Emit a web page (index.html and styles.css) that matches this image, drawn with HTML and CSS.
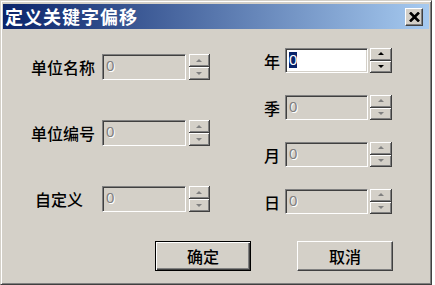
FILE: index.html
```html
<!DOCTYPE html>
<html lang="zh-CN">
<head>
    <meta charset="UTF-8">
    <title>定义关键字偏移</title>
    <link rel="stylesheet" href="styles.css">
</head>
<body>

<div class="window">
    <div class="titlebar">
        <span class="title">定义关键字偏移</span>
        <div class="close" aria-label="关闭">
            <svg width="11" height="10" viewBox="0 0 11 10">
                <path d="M1 0.5 L10 9.5 M10 0.5 L1 9.5" stroke="#000" stroke-width="2.6"/>
            </svg>
        </div>
    </div>

    <div class="body">
        <div class="fields">
            <!-- left column -->
            <div class="col col-left">
                <div class="field">
                    <span class="label">单位名称</span>
                    <div class="edit disabled"><span>0</span></div>
                    <div class="spinner disabled"><div class="spin up"></div><div class="spin down"></div></div>
                </div>
                <div class="field">
                    <span class="label">单位编号</span>
                    <div class="edit disabled"><span>0</span></div>
                    <div class="spinner disabled"><div class="spin up"></div><div class="spin down"></div></div>
                </div>
                <div class="field">
                    <span class="label label-indent">自定义</span>
                    <div class="edit disabled"><span>0</span></div>
                    <div class="spinner disabled"><div class="spin up"></div><div class="spin down"></div></div>
                </div>
            </div>

            <!-- right column -->
            <div class="col col-right">
                <div class="field">
                    <span class="label">年</span>
                    <div class="edit"><span class="selected">0</span></div>
                    <div class="spinner"><div class="spin up"></div><div class="spin down"></div></div>
                </div>
                <div class="field">
                    <span class="label">季</span>
                    <div class="edit disabled"><span>0</span></div>
                    <div class="spinner disabled"><div class="spin up"></div><div class="spin down"></div></div>
                </div>
                <div class="field">
                    <span class="label">月</span>
                    <div class="edit disabled"><span>0</span></div>
                    <div class="spinner disabled"><div class="spin up"></div><div class="spin down"></div></div>
                </div>
                <div class="field">
                    <span class="label">日</span>
                    <div class="edit disabled"><span>0</span></div>
                    <div class="spinner disabled"><div class="spin up"></div><div class="spin down"></div></div>
                </div>
            </div>
        </div>

        <div class="actions">
            <div class="btn btn-default">确定</div>
            <div class="btn">取消</div>
        </div>
    </div>
</div>

</body>
</html>
```

FILE: styles.css
```css
body {
    margin: 0;
    background: #fff;
    font-family: "Noto Sans CJK SC", "Liberation Sans", sans-serif;
}

.window {
    width: 432px;
    height: 285px;
    box-sizing: border-box;
    background: #d4d0c8;
    border: 1px solid;
    border-color: #d4d0c8 #404040 #404040 #d4d0c8;
    box-shadow: inset 1px 1px #fff, inset -1px -1px #808080;
    padding: 3px 2px 2px 2px;
    display: flex;
    flex-direction: column;
}

.titlebar {
    height: 25px;
    background: linear-gradient(to right, #0a246a, #a6caf0);
    display: flex;
    align-items: center;
    justify-content: space-between;
    padding: 0 6px 0 2px;
}

.title {
    color: #fff;
    font-weight: bold;
    font-size: 18px;
    line-height: 25px;
    letter-spacing: 1px;
}

.close {
    width: 18px;
    height: 18px;
    box-sizing: border-box;
    background: #d4d0c8;
    border: 1px solid;
    border-color: #fff #404040 #404040 #fff;
    box-shadow: inset -1px -1px #808080;
    display: flex;
    align-items: center;
    justify-content: center;
}

.body {
    flex: 1;
    display: flex;
    flex-direction: column;
}

.fields {
    display: flex;
    align-items: flex-start;
}

.col {
    display: flex;
    flex-direction: column;
}

.col-left {
    margin-left: 28px;
    margin-top: 25px;
    gap: 40px;
}

.col-right {
    margin-left: 48px;
    margin-top: 19px;
    gap: 22px;
}

.field {
    display: flex;
    align-items: center;
    height: 26px;
}

.col-right .field {
    height: 25px;
}

.label {
    font-size: 16px;
    font-weight: 500;
    color: #000;
    width: 71px;
}

.label-indent {
    padding-left: 4px;
    box-sizing: border-box;
}

.col-right .label {
    width: 27px;
    text-align: right;
    padding-right: 5px;
    box-sizing: border-box;
}

.edit {
    width: 84px;
    height: 100%;
    box-sizing: border-box;
    background: #fff;
    border: 1px solid;
    border-color: #808080 #fff #fff #808080;
    box-shadow: inset 1px 1px #404040, inset -1px -1px #d4d0c8;
    padding: 2px 0 0 3px;
    font-family: "Liberation Sans", sans-serif;
    font-size: 15px;
    line-height: 18px;
}

.col-right .edit {
    width: 83px;
}

.edit.disabled {
    background: #d4d0c8;
    color: #808080;
    text-shadow: 1px 1px #fff;
}

.selected {
    display: inline-block;
    background: #0a246a;
    color: #fff;
    width: 8px;
    text-align: center;
    line-height: 16px;
}

.spinner {
    width: 21px;
    height: 100%;
    margin-left: 3px;
    display: flex;
    flex-direction: column;
}

.col-right .spinner {
    margin-left: 2px;
    width: 22px;
}

.spin {
    flex: 1;
    background: #d4d0c8;
    border-right: 1px solid #404040;
    border-bottom: 1px solid #404040;
    box-shadow: inset 1px 1px #fff, inset -1px -1px #808080;
    display: flex;
    align-items: center;
    justify-content: center;
}

.spin::after {
    content: "";
    border-left: 3px solid transparent;
    border-right: 3px solid transparent;
}

.spin.up::after {
    border-bottom: 3px solid #000;
}

.spin.down::after {
    border-top: 3px solid #000;
}

.spinner.disabled .spin.up::after {
    border-bottom-color: #808080;
}

.spinner.disabled .spin.down::after {
    border-top-color: #808080;
}

.actions {
    display: flex;
    margin-top: 27px;
    margin-left: 152px;
    gap: 46px;
}

.btn {
    width: 96px;
    height: 30px;
    box-sizing: border-box;
    background: #d4d0c8;
    border: 1px solid;
    border-color: #fff #404040 #404040 #fff;
    box-shadow: inset -1px -1px #808080;
    font-size: 16px;
    font-weight: 500;
    line-height: 28px;
    text-align: center;
    color: #000;
}

.btn-default {
    border: 1px solid #000;
    box-shadow: inset 1px 1px #fff, inset -1px -1px #404040, inset -2px -2px #808080;
}
```
